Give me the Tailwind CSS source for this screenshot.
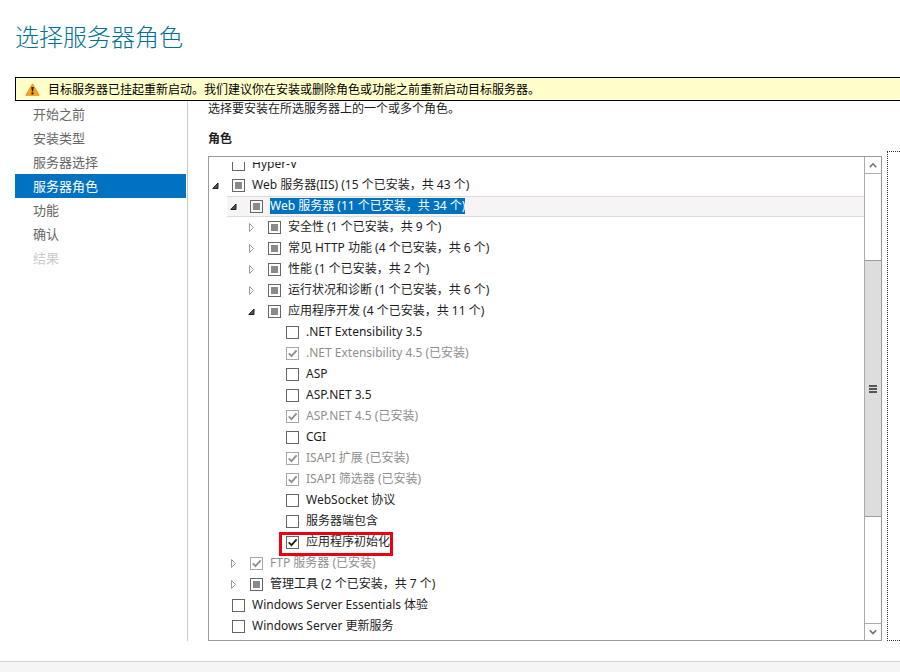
<!DOCTYPE html>
<html lang="zh-CN">
<head>
    <meta charset="UTF-8">
    <meta name="viewport" content="width=device-width, initial-scale=1.0">
    <title>选择服务器角色</title>
    <script src="https://cdn.jsdelivr.net/npm/@tailwindcss/browser@4"></script>
</head>
<body class="flex min-h-screen flex-col overflow-x-hidden bg-white font-['Noto_Sans','Noto_Sans_CJK_SC',sans-serif] text-xs text-[#1e1e1e]">
    <header class="px-[15px] pt-[19px] pb-[22px]">
        <h1 class="text-2xl leading-9 font-light text-[#007299]">选择服务器角色</h1>
    </header>

    <!-- 重启提示 -->
    <div role="alert" class="ml-[15px] flex h-6 items-center gap-2 border-y border-l border-black bg-[#ffffcc] pl-[9px] text-black">
        <svg class="h-[13px] w-[15px] shrink-0" viewBox="0 0 15 13">
            <path d="M7.5 0.8L14.2 12.3H0.8Z" fill="#f5a21d" stroke="#ee9420" stroke-width="1" stroke-linejoin="round"/>
            <path d="M6.3 4h2.4l-.6 4.6H6.9z" fill="#2a1a10"/>
            <rect x="6.5" y="9.4" width="2" height="2" fill="#2a1a10"/>
        </svg>
        <span class="pt-px">目标服务器已挂起重新启动。我们建议你在安装或删除角色或功能之前重新启动目标服务器。</span>
    </div>

    <main class="flex grow pb-5 pl-[15px]">
        <nav class="w-[173px] shrink-0 border-r border-[#c8c8c8] pt-px pr-px text-[13px] leading-6 text-[#666666]">
            <a href="#" class="block pl-[18px]">开始之前</a>
            <a href="#" class="block pl-[18px]">安装类型</a>
            <a href="#" class="block pl-[18px]">服务器选择</a>
            <a href="#" aria-current="step" class="block bg-[#0072c0] pl-[18px] text-white">服务器角色</a>
            <a href="#" class="block pl-[18px]">功能</a>
            <a href="#" class="block pl-[18px]">确认</a>
            <a href="#" aria-disabled="true" class="block pl-[18px] text-[#cacaca]">结果</a>
        </nav>

        <section class="flex min-w-0 grow flex-col pl-5">
            <p class="leading-4">选择要安装在所选服务器上的一个或多个角色。</p>
            <h2 class="mt-[14px] leading-4 font-bold">角色</h2>

            <div class="flex grow">
                <div class="mt-[9px] flex grow border border-[#9c9c9c]">
                    <div class="min-w-0 grow overflow-hidden pt-[5px] pb-[3px]">
                        <div class="h-full overflow-hidden">
                            <ul id="roleTree" class="-mt-2"></ul>
                        </div>
                    </div>

                    <!-- 滚动条 -->
                    <div class="flex w-[17px] shrink-0 flex-col border-l border-[#ababab]">
                        <button type="button" aria-label="向上滚动" class="flex h-[17px] shrink-0 items-center justify-center border-b border-[#ababab]">
                            <svg class="h-2 w-2" viewBox="0 0 8 8" fill="none" stroke="#707070" stroke-width="1.6"><path d="M0.8 6.2L4 2.8L7.2 6.2"/></svg>
                        </button>
                        <div class="grow-[86]"></div>
                        <div class="flex grow-[247] items-center justify-center border-y border-[#9c9c9c] bg-[#dddddd]">
                            <svg class="h-2 w-2" viewBox="0 0 8 8" fill="#555555"><path d="M0 0h8v2H0zM0 3h8v2H0zM0 6h8v2H0z"/></svg>
                        </div>
                        <div class="grow-[106]"></div>
                        <button type="button" aria-label="向下滚动" class="flex h-[17px] shrink-0 items-center justify-center border-t border-[#ababab]">
                            <svg class="h-2 w-2" viewBox="0 0 8 8" fill="none" stroke="#707070" stroke-width="1.6"><path d="M0.8 2.2L4 5.6L7.2 2.2"/></svg>
                        </button>
                    </div>
                </div>
                <div class="mt-1 ml-[5px] w-[13px] shrink-0 border-y border-l border-dotted border-[#333333]"></div>
            </div>
        </section>
    </main>

    <footer class="h-[11px] border-t border-[#cfcfcf] bg-[#f7f4f5]"></footer>

    <script>
        // state: off | on | part | installed
        const roles = [
            { name: 'Hyper-V', state: 'off' },
            { name: 'Web 服务器(IIS) (15 个已安装，共 43 个)', state: 'part', open: true, children: [
                { name: 'Web 服务器 (11 个已安装，共 34 个)', state: 'part', open: true, selected: true, children: [
                    { name: '安全性 (1 个已安装，共 9 个)', state: 'part', open: false },
                    { name: '常见 HTTP 功能 (4 个已安装，共 6 个)', state: 'part', open: false },
                    { name: '性能 (1 个已安装，共 2 个)', state: 'part', open: false },
                    { name: '运行状况和诊断 (1 个已安装，共 6 个)', state: 'part', open: false },
                    { name: '应用程序开发 (4 个已安装，共 11 个)', state: 'part', open: true, children: [
                        { name: '.NET Extensibility 3.5', state: 'off' },
                        { name: '.NET Extensibility 4.5 (已安装)', state: 'installed' },
                        { name: 'ASP', state: 'off' },
                        { name: 'ASP.NET 3.5', state: 'off' },
                        { name: 'ASP.NET 4.5 (已安装)', state: 'installed' },
                        { name: 'CGI', state: 'off' },
                        { name: 'ISAPI 扩展 (已安装)', state: 'installed' },
                        { name: 'ISAPI 筛选器 (已安装)', state: 'installed' },
                        { name: 'WebSocket 协议', state: 'off' },
                        { name: '服务器端包含', state: 'off' },
                        { name: '应用程序初始化', state: 'on', marked: true }
                    ] }
                ] },
                { name: 'FTP 服务器 (已安装)', state: 'installed', open: false },
                { name: '管理工具 (2 个已安装，共 7 个)', state: 'part', open: false }
            ] },
            { name: 'Windows Server Essentials 体验', state: 'off' },
            { name: 'Windows Server 更新服务', state: 'off' }
        ];

        const boxClass = {
            off: 'border-[#666666] bg-white',
            on: 'border-[#666666] bg-white',
            part: 'border-[#666666] bg-[#8a8a8a] bg-clip-content p-[2px]',
            installed: 'border-[#a8a8a8] bg-white'
        };

        function arrow(role) {
            if (role.open === undefined) return '<span class="w-5"></span>';
            const shape = role.open
                ? '<path d="M6 2V7.5H0.8Z" fill="#555555" stroke="#1e1e1e"/>'
                : '<path d="M1.5 0.5L5.5 4.5L1.5 8.5Z" fill="#ffffff" stroke="#9a9a9a"/>';
            return `<button type="button" aria-label="${role.open ? '折叠' : '展开'}" class="flex w-5">
                <svg class="h-[9px] w-[7px]" viewBox="0 0 7 9">${shape}</svg>
            </button>`;
        }

        function check(role) {
            if (role.state !== 'on' && role.state !== 'installed') return '';
            const color = role.state === 'on' ? '#1e1e1e' : '#8f8f8f';
            return `<svg class="pointer-events-none col-start-1 row-start-1 size-[13px]" viewBox="0 0 13 13" fill="none" stroke="${color}" stroke-width="1.8"><path d="M2.8 6.3L5.5 9.2L10.6 3.4"/></svg>`;
        }

        function row(role) {
            return `<li>
                <div class="flex h-[21px] items-center border-y pl-[3px] ${role.selected ? 'border-[#dedada] bg-[#f7f4f5]' : 'border-transparent'}">
                    ${arrow(role)}
                    <label class="relative flex items-center gap-[7px] whitespace-nowrap ${role.state === 'installed' ? 'text-[#8f8f8f]' : ''}">
                        <span class="grid">
                            <input type="checkbox" class="col-start-1 row-start-1 size-[13px] appearance-none border ${boxClass[role.state]}" data-state="${role.state}">
                            ${check(role)}
                        </span>
                        <span class="mb-0.5 leading-4 ${role.selected ? 'bg-[#0072c0] text-white' : ''}">${role.name}</span>
                        ${role.marked ? '<span class="absolute -top-[2px] -right-[3px] -bottom-1 -left-[7px] border-3 border-[#ea0010]"></span>' : ''}
                    </label>
                </div>
                ${role.children ? `<ul class="pl-[18px]">${role.children.map(row).join('')}</ul>` : ''}
            </li>`;
        }

        const tree = document.getElementById('roleTree');
        tree.innerHTML = roles.map(row).join('');
        tree.querySelectorAll('input').forEach(box => {
            box.checked = box.dataset.state === 'on' || box.dataset.state === 'installed';
            box.indeterminate = box.dataset.state === 'part';
            box.disabled = box.dataset.state === 'installed';
        });
    </script>
</body>
</html>
